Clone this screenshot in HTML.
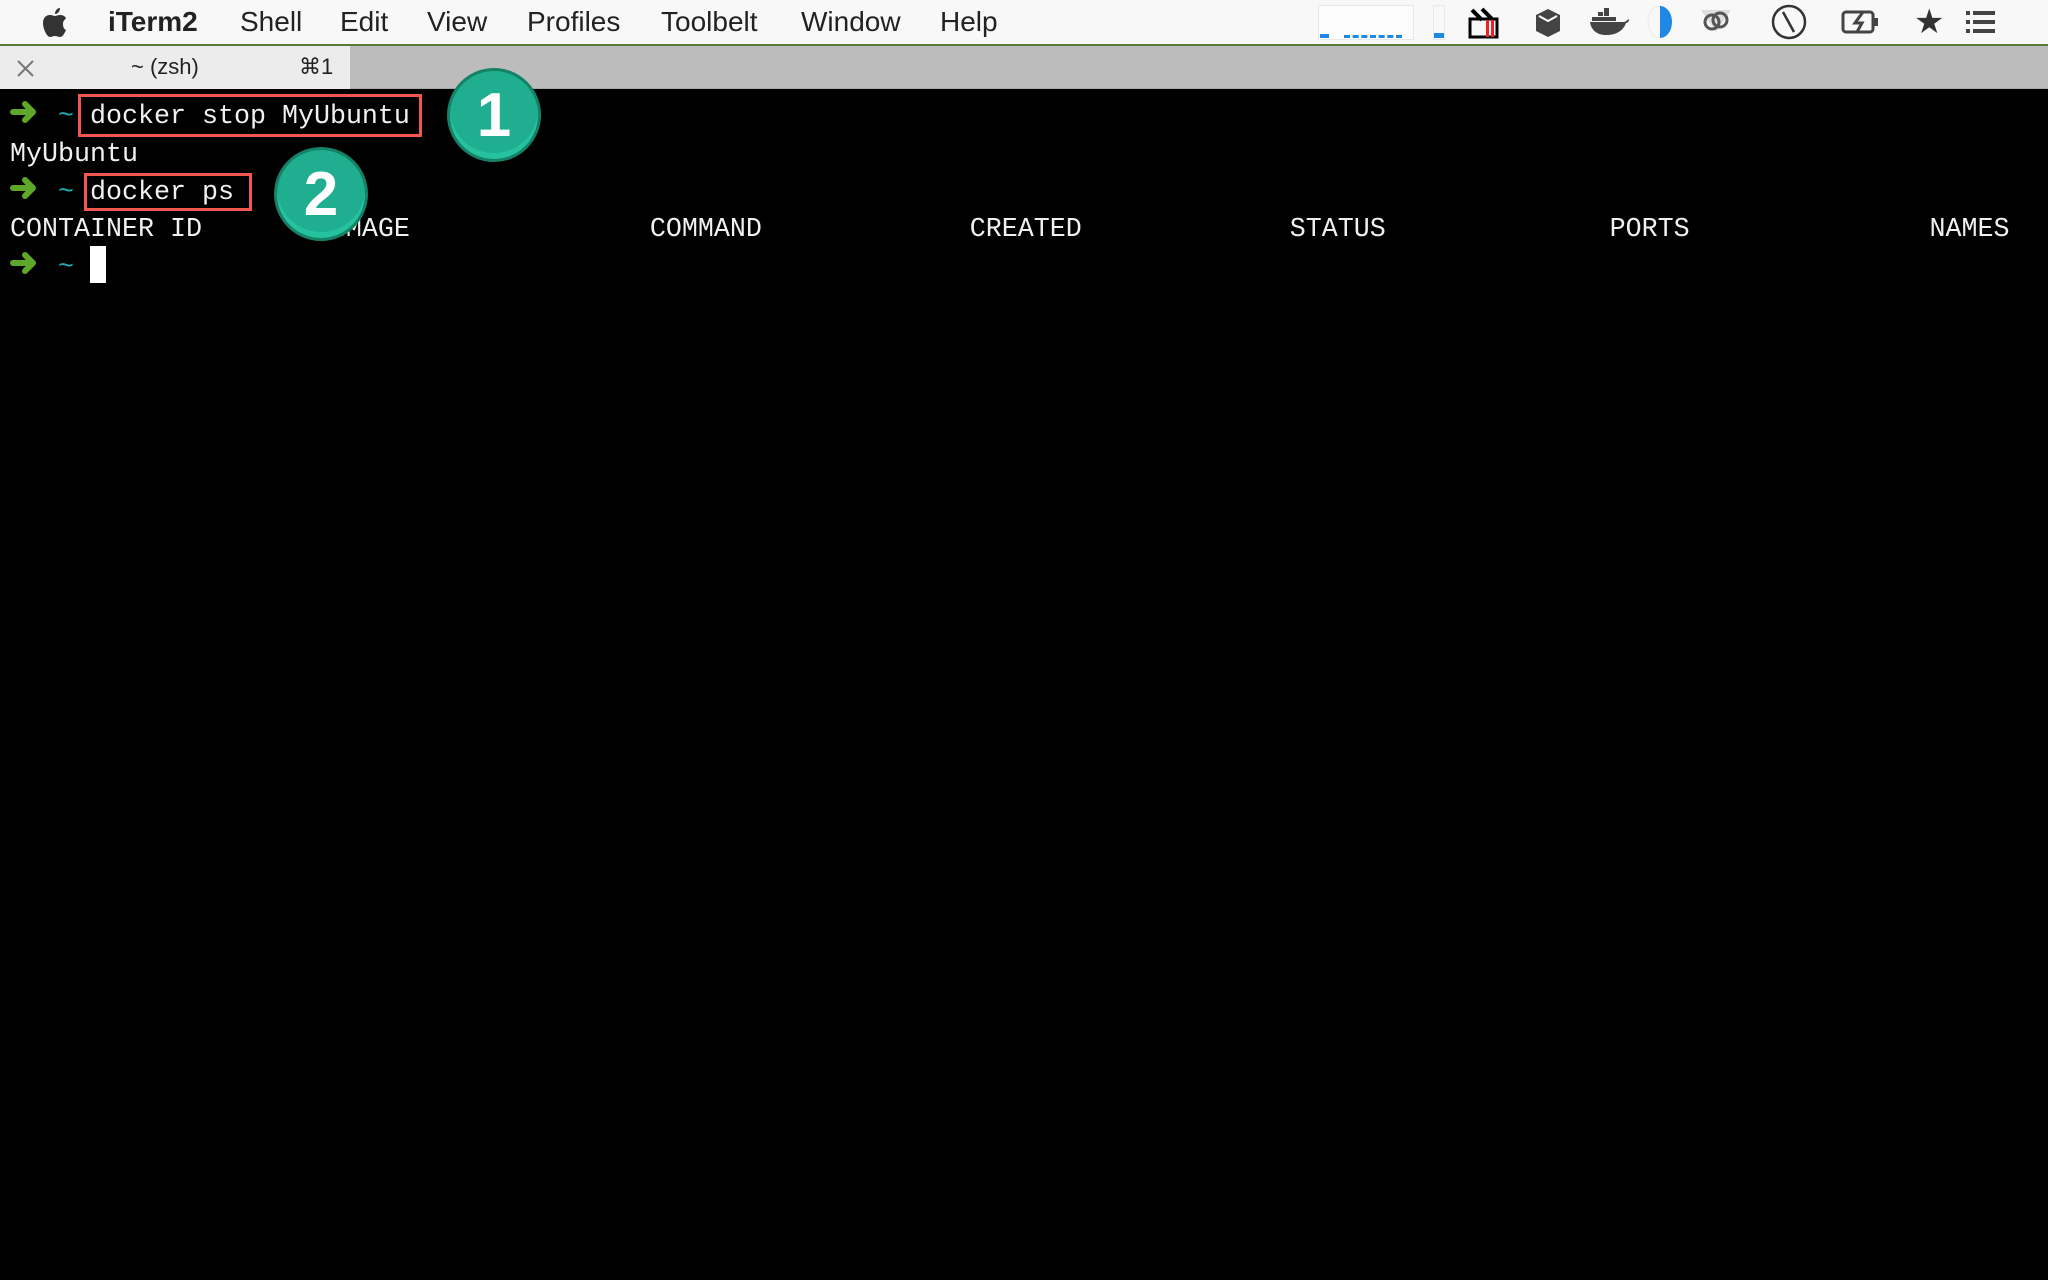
<!DOCTYPE html>
<html><head><meta charset="utf-8"><style>
*{margin:0;padding:0;box-sizing:border-box}
body{width:2048px;height:1280px;background:#000;overflow:hidden;position:relative;font-family:"Liberation Sans",sans-serif}
#menu{position:absolute;left:0;top:0;width:2048px;height:44px;background:#f8f8f8}
#green{position:absolute;left:0;top:44px;width:2048px;height:2px;background:#5a7a3a}
.mi{position:absolute;top:6px;font-size:28px;color:#222;white-space:nowrap}
#tabs{position:absolute;left:0;top:46px;width:2048px;height:43px;background:#bcbcbc;border-bottom:1px solid #a8a8a8}
#tab{position:absolute;left:0;top:46px;width:350px;height:43px;background:#ececec}
.t{position:absolute;font-size:22px;color:#222}
.l{position:absolute;left:10px;font-family:"Liberation Mono",monospace;font-size:26.67px;line-height:37.75px;color:#f0f0f0;white-space:pre}
.c{color:#1fa8b0}
.ar{position:absolute;left:10px}
.box{position:absolute;border:3px solid #f0584f}
.circ{position:absolute;width:94px;height:94px;border-radius:50%;background:#1fae8f;border:3px solid #158268;color:#fff;font-weight:bold;font-size:62px;text-align:center;line-height:90px;box-shadow:inset 0 -6px 0 #26c29f}
</style></head><body>
<div id="menu"></div><div id="green"></div>
<svg style="position:absolute;left:42px;top:8px" width="26" height="30" viewBox="0 0 26 30"><path d="M18 0c0 3-2 6-5 6 0-3 2-6 5-6zM21 16c0-4 3-5 3-6-2-3-5-3-6-3-2 0-4 1-5 1s-3-1-5-1C4 7 1 10 1 15c0 6 4 14 7 14 2 0 3-1 5-1s3 1 5 1c3 0 5-5 6-7-2-1-3-3-3-6z" fill="#333"/></svg>
<div class="mi" style="left:108px;font-weight:bold">iTerm2</div>
<div class="mi" style="left:240px">Shell</div>
<div class="mi" style="left:340px">Edit</div>
<div class="mi" style="left:427px">View</div>
<div class="mi" style="left:527px">Profiles</div>
<div class="mi" style="left:661px">Toolbelt</div>
<div class="mi" style="left:801px">Window</div>
<div class="mi" style="left:940px">Help</div>
<div style="position:absolute;left:1318px;top:5px;width:96px;height:35px;border:1px solid #e8e8e8;background:#fcfcfc"></div>
<div style="position:absolute;left:1320px;top:34px;width:9px;height:4px;background:#1e88e5"></div>
<div style="position:absolute;left:1344px;top:35px;width:58px;height:3px;border-bottom:3px dashed #1e88e5"></div>
<div style="position:absolute;left:1433px;top:5px;width:12px;height:35px;border:1px solid #e8e8e8"></div>
<div style="position:absolute;left:1434px;top:33px;width:10px;height:5px;background:#1e88e5"></div>
<svg style="position:absolute;left:1468px;top:6px" width="32" height="33"><rect x="2" y="13" width="27" height="18" fill="none" stroke="#000" stroke-width="3"/><path d="M4 4l10 10M14 3l12 12" stroke="#000" stroke-width="4"/><rect x="18" y="14" width="3" height="17" fill="#e22"/><rect x="23" y="14" width="3" height="17" fill="#e22"/></svg>
<svg style="position:absolute;left:1533px;top:7px" width="30" height="32"><path d="M15 2l12 6v16l-12 6-12-6V8z" fill="#444"/><path d="M6 9l9 5 9-5" stroke="#fff" stroke-width="2" fill="none"/></svg>
<svg style="position:absolute;left:1590px;top:8px" width="40" height="28"><rect x="8" y="4" width="5" height="4" fill="#444"/><rect x="14" y="4" width="5" height="4" fill="#444"/><rect x="14" y="0" width="5" height="4" fill="#444"/><rect x="2" y="9" width="24" height="4" fill="#444"/><path d="M0 14h34c2 0 4-3 5-3 0 2-1 4-3 4-3 8-10 12-20 12C7 27 1 22 0 14z" fill="#444"/></svg>
<svg style="position:absolute;left:1646px;top:4px" width="28" height="36"><ellipse cx="14" cy="18" rx="12" ry="16" fill="none" stroke="#eee" stroke-width="1.5"/><path d="M14 2a12 16 0 0 1 0 32z" fill="#1e88e5"/></svg>
<svg style="position:absolute;left:1699px;top:6px" width="34" height="32"><path d="M2 4l15 22L32 4z" fill="#ddd"/><circle cx="13" cy="16" r="7" fill="none" stroke="#555" stroke-width="3"/><circle cx="21" cy="14" r="7" fill="none" stroke="#555" stroke-width="3"/></svg>
<svg style="position:absolute;left:1770px;top:4px" width="38" height="36"><ellipse cx="19" cy="18" rx="16" ry="16" fill="none" stroke="#333" stroke-width="2.5"/><path d="M13 8l11 20" stroke="#333" stroke-width="2.5"/></svg>
<svg style="position:absolute;left:1841px;top:9px" width="38" height="26"><rect x="2" y="3" width="30" height="20" rx="3" fill="none" stroke="#444" stroke-width="3"/><rect x="33" y="9" width="4" height="8" fill="#444"/><path d="M22 3l-8 11h7l-5 9" stroke="#444" stroke-width="3" fill="none"/></svg>
<div style="position:absolute;left:1914px;top:2px;font-size:34px;color:#333">★</div>
<svg style="position:absolute;left:1966px;top:11px" width="30" height="22"><g fill="#444"><rect x="0" y="0" width="4" height="4"/><rect x="7" y="0" width="22" height="4"/><rect x="0" y="9" width="4" height="4"/><rect x="7" y="9" width="22" height="4"/><rect x="0" y="18" width="4" height="4"/><rect x="7" y="18" width="22" height="4"/></g></svg>
<div id="tabs"></div><div id="tab"></div>
<svg style="position:absolute;left:17px;top:60px" width="17" height="17"><path d="M1 1l15 15M16 1L1 16" stroke="#777" stroke-width="2"/></svg>
<div class="t" style="left:131px;top:54px">~ (zsh)</div>
<div class="t" style="left:299px;top:54px">⌘1</div>
<svg width="0" height="0" style="position:absolute"><defs><path id="arr" d="M3 11h20M15 3l8 8-8 8" stroke="#5fa728" stroke-width="6" stroke-linecap="round" stroke-linejoin="round" fill="none"/></defs></svg>
<svg class="ar" style="top:101px" width="34" height="24"><use href="#arr"/></svg>
<svg class="ar" style="top:177px" width="34" height="24"><use href="#arr"/></svg>
<svg class="ar" style="top:252px" width="34" height="24"><use href="#arr"/></svg>
<div class="l" style="top:99px">   <span class="c">~</span> docker stop MyUbuntu</div>
<div class="l" style="top:137px">MyUbuntu</div>
<div class="l" style="top:175px">   <span class="c">~</span> docker ps</div>
<div class="l" style="top:212px">CONTAINER ID        IMAGE               COMMAND             CREATED             STATUS              PORTS               NAMES</div>
<div class="l" style="top:250px">   <span class="c">~</span></div>
<div style="position:absolute;left:90px;top:246px;width:16px;height:37px;background:#fff"></div>
<div class="box" style="left:78px;top:94px;width:344px;height:43px"></div>
<div class="box" style="left:84px;top:173px;width:168px;height:38px"></div>
<div class="circ" style="left:447px;top:68px">1</div>
<div class="circ" style="left:274px;top:147px">2</div>
</body></html>
